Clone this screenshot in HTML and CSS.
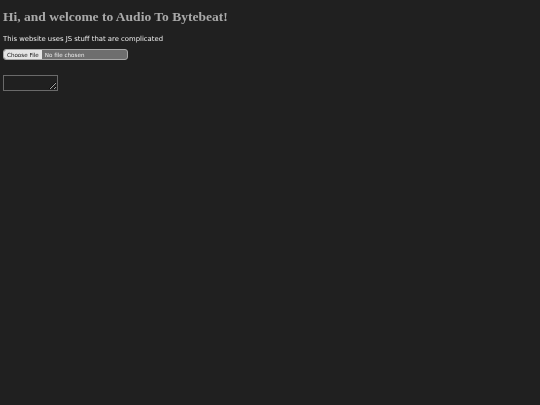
FILE: index.html
```html
<!DOCTYPE html>
<html lang="en">
<head>
<meta charset="utf-8">
<title>Audio To Bytebeat</title>
<link rel="stylesheet" href="styles.css">
</head>
<body>
<h1 class="title">Hi, and welcome to Audio To Bytebeat!</h1>
<p class="note">This website uses JS stuff that are complicated</p>
<div class="picker">
  <input class="file" type="file" accept="audio/*">
</div>
<textarea class="output"></textarea>
</body>
</html>
```

FILE: styles.css
```css
html {
  background: #202020;
}
body {
  margin: 0;
  padding: 9px 3px 0;
  background: #202020;
  color: #e8e8e8;
  font-family: "DejaVu Sans", sans-serif;
  font-size: 7px;
}
.title {
  margin: 0 0 10px;
  font-family: "Liberation Serif", "Times New Roman", serif;
  font-size: 13.5px;
  font-weight: bold;
  color: #a9a9a9;
}
.note {
  margin: 0 0 6px;
  font-size: 6.85px;
}
.picker {
  margin: 0 0 15px;
  line-height: 0;
}
.file {
  width: 125px;
  height: 11px;
  box-sizing: border-box;
  padding: 0;
  margin: 0;
  font-family: "DejaVu Sans", sans-serif;
  font-size: 5.6px;
  color: #ececec;
  background: #6e6e6e;
  border: 1px solid #a8a8a8;
  border-radius: 3px;
}
.file::file-selector-button {
  height: 9px;
  margin: 0 3px 0 0;
  padding: 0 3px;
  font-family: "DejaVu Sans", sans-serif;
  font-size: 5.6px;
  color: #111;
  background: #e4e4e4;
  border: none;
  border-radius: 2px 0 0 2px;
}
.output {
  display: block;
  margin: 0;
  width: 55px;
  height: 16px;
  box-sizing: border-box;
  padding: 0;
  background: #202020;
  border: 1px solid #6a6a6a;
  resize: vertical;
}
```
